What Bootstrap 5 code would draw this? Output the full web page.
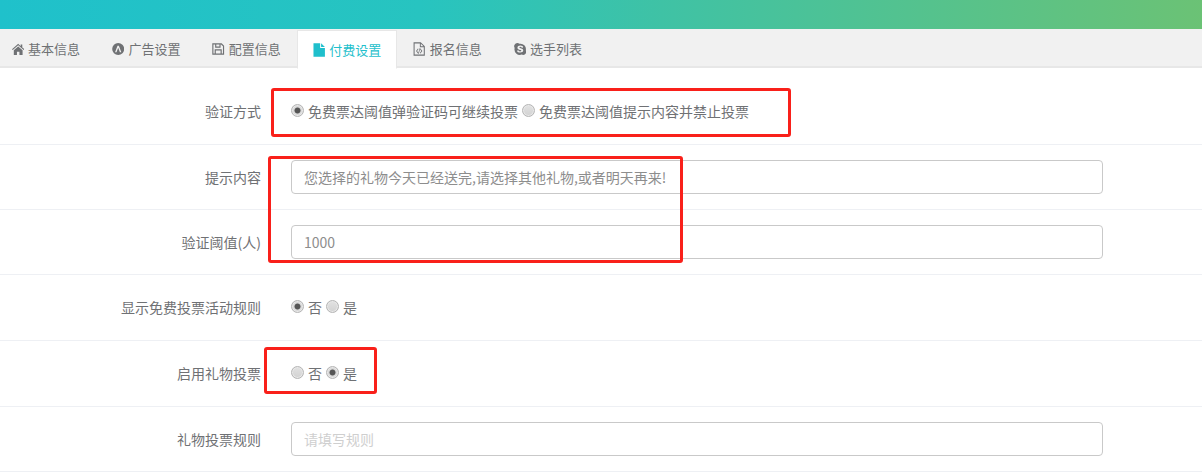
<!DOCTYPE html>
<html lang="zh"><head><meta charset="utf-8"><title>付费设置</title>
<link rel="stylesheet" href="https://cdn.jsdelivr.net/npm/bootstrap@5.3.0/dist/css/bootstrap.min.css">
<style>
html,body{height:476px;overflow:hidden}
body{font-family:"Microsoft YaHei","Noto Sans CJK SC",sans-serif;font-size:14px;color:#6f7174;background:#fff;position:relative}
.topbar{height:29px;background:linear-gradient(90deg,#1fc1cb 0%,#27c4c0 35%,#3fc2a5 55%,#6bc275 100%)}
.tabbar{height:39px;background:#f1f1f1;border-bottom:2px solid #e7e7e7;margin-bottom:11px}
.tabbar .nav{margin-left:-4.4px;border-bottom:0;flex-wrap:nowrap}
.tabbar .nav-link{height:39px;padding:0 15px 2px;margin:1px 0 0;border:1px solid transparent;border-radius:0;font-size:13px;color:#6f7174;display:flex;align-items:center;gap:4px;line-height:1;background:transparent}
.tabbar .nav-link.active{background:#fff;color:#1fbfcc;border-color:#e7e7e7;border-bottom-color:#fff;padding-bottom:0}
.tabbar svg{width:12.4px;height:14px;flex:none;fill:currentColor}
.frow{height:65px;border-bottom:1px solid #eef0f4;padding:15px 0;margin:0;flex-wrap:nowrap}
.frow.tall{height:66px}
.flabel{width:261px;flex:none;text-align:right;padding:0;line-height:34px;margin:0;white-space:nowrap}
.fbody{width:812px;flex:none;margin-left:30px;padding:0;display:flex;align-items:center;height:34px;white-space:nowrap}
.fbody .form-control{height:34px;border:1px solid #c9c9c9;border-radius:4px;padding:6px 12px;font-size:14px;color:#8d8d8d;box-shadow:none}
.fbody .form-control::placeholder{color:#cfcfcf}
.rdo{appearance:none;-webkit-appearance:none;width:13px;height:13px;border-radius:50%;margin:0 4px 1px 0;flex:none;border:1px solid #b5b5b5;background:linear-gradient(180deg,#e2e2e2,#d2d2d2);box-shadow:inset 0 0 0 1px #e8e8e8}
.rdo:checked{background:radial-gradient(circle,#555 0 2.6px,#d8d8d8 3.4px)}
.rlabel{margin-right:4px}
.mark-box{position:absolute;border:3px solid #f9201a;border-radius:3px;pointer-events:none}
.b1{left:271px;top:88px;width:520px;height:49px}
.b2{left:268px;top:156px;width:415px;height:107px}
.b3{left:264px;top:347px;width:113px;height:47px}
</style></head><body>
<div class="topbar"></div>
<div class="tabbar">
<ul class="nav nav-tabs">
<li class="nav-item"><a class="nav-link" href="#"><svg viewBox="0 0 13 14"><path d="M6.500 1.500 0 7.200l.8.900 5.700-5 5.700 5 .8-.9-2.200-1.900V2.200H9.100v1.800zM1.900 8.300v5h3.300V9.800h2.600v3.500h3.300v-5L6.500 4.300z"/></svg>基本信息</a></li>
<li class="nav-item"><a class="nav-link" href="#"><svg viewBox="0 0 13 14"><path fill-rule="evenodd" d="M6.500.7a6.300 6.300 0 1 0 0 12.600 6.300 6.300 0 0 0 0-12.600zM5.800 3.500h1.400l2.600 6.800H8.300L6.500 5.800 4.700 10.300H3.200z"/></svg>广告设置</a></li>
<li class="nav-item"><a class="nav-link" href="#"><svg viewBox="0 0 13 14"><path fill-rule="evenodd" d="M.3 1h9.800l2.600 2.600V13H.3zM1.500 2.200v9.600h1.300V7.300h7.400v4.500h1.300V4.200L9.500 2.200H9v3.500H3.300V2.200zM4 8.500v3.300h5V8.500zM4.500 2.200v2.300h3.300V2.200z"/></svg>配置信息</a></li>
<li class="nav-item"><a class="nav-link active" href="#" aria-current="page"><svg viewBox="0 0 13 14"><path d="M.5 0h7v4.800h5V14H.5zM8.500 0l4 3.800h-4z"/></svg>付费设置</a></li>
<li class="nav-item"><a class="nav-link" href="#"><svg viewBox="0 0 13 14"><path fill-rule="evenodd" d="M.6 0h7.500l4.300 4.100V14H.6zM1.700 1.100v11.800h9.600V5.200H7.200V1.100zM8.200 1.400v2.700h2.800zM5.200 6.500l.6.600-1.500 2 1.500 2-.6.600-2-2.600zM7.800 6.500l2 2.600-2 2.600-.6-.6 1.500-2-1.500-2zM6.900 6.200l.7.100-1.500 5.800-.7-.1z"/></svg>报名信息</a></li>
<li class="nav-item"><a class="nav-link" href="#"><svg viewBox="0 0 13 14"><path fill-rule="evenodd" d="M3.600.8c.8 0 1.500.2 2.100.7A5.800 5.800 0 0 1 12.400 8.400a3.300 3.300 0 0 1-4.300 4.500A5.800 5.800 0 0 1 .7 5.900 3.300 3.300 0 0 1 3.600.8zM6.700 3.300c-1.800 0-3.100.9-3.100 2.300 0 2.600 4.100 1.900 4.100 3.100 0 .5-.5.800-1.200.8-1.500 0-1.400-1.300-2.400-1.300-.5 0-.8.300-.8.800 0 .9 1.500 1.800 3.200 1.800 2 0 3.200-1 3.200-2.400 0-2.700-4.100-2-4.100-3.100 0-.4.400-.7 1-.7 1.300 0 1.300 1.100 2.200 1.100.5 0 .8-.3.800-.8 0-.8-1.200-1.600-2.900-1.600z"/></svg>选手列表</a></li>
</ul>
</div>
<form>
<div class="row frow tall"><label class="flabel">验证方式</label><div class="fbody"><input class="rdo" type="radio" name="a" checked><span class="rlabel">免费票达阈值弹验证码可继续投票</span><input class="rdo" type="radio" name="a"><span class="rlabel">免费票达阈值提示内容并禁止投票</span></div></div>
<div class="row frow"><label class="flabel">提示内容</label><div class="fbody"><input class="form-control" type="text" value="您选择的礼物今天已经送完,请选择其他礼物,或者明天再来!"></div></div>
<div class="row frow"><label class="flabel">验证阈值(人)</label><div class="fbody"><input class="form-control" type="text" value="1000"></div></div>
<div class="row frow tall"><label class="flabel">显示免费投票活动规则</label><div class="fbody"><input class="rdo" type="radio" name="b" checked><span class="rlabel">否</span><input class="rdo" type="radio" name="b"><span class="rlabel">是</span></div></div>
<div class="row frow tall"><label class="flabel">启用礼物投票</label><div class="fbody"><input class="rdo" type="radio" name="c"><span class="rlabel">否</span><input class="rdo" type="radio" name="c" checked><span class="rlabel">是</span></div></div>
<div class="row frow"><label class="flabel">礼物投票规则</label><div class="fbody"><input class="form-control" type="text" placeholder="请填写规则"></div></div>
</form>
<div class="mark-box b1"></div><div class="mark-box b2"></div><div class="mark-box b3"></div>
<script src="https://cdn.jsdelivr.net/npm/bootstrap@5.3.0/dist/js/bootstrap.bundle.min.js"></script>
</body></html>
